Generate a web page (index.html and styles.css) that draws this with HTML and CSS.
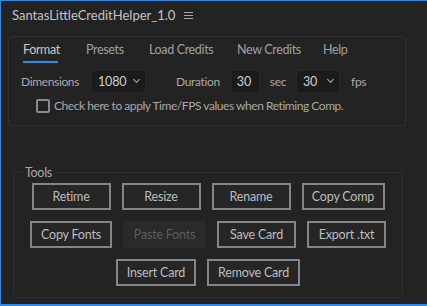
FILE: index.html
```html
<!DOCTYPE html>
<html lang="en">
<head>
    <meta charset="UTF-8">
    <title>SantasLittleCreditHelper_1.0</title>
    <link rel="stylesheet" href="styles.css">
</head>
<body>
    <div class="header">
        <span class="title">SantasLittleCreditHelper_1.0</span>
        <svg class="menu" width="9" height="8" viewBox="0 0 9 8"><path d="M0 1.5h9M0 4.5h9M0 7.5h9" stroke="#a8a8a8" stroke-width="1"/></svg>
    </div>

    <div class="panel">
        <div class="tabs">
            <span class="tab t1 active">Format</span>
            <span class="tab t2">Presets</span>
            <span class="tab t3">Load Credits</span>
            <span class="tab t4">New Credits</span>
            <span class="tab">Help</span>
        </div>
        <div class="row">
            <label class="lbl">Dimensions</label>
            <div class="select sel-dim">1080 <span class="chev"></span></div>
            <label class="lbl lbl-dur">Duration</label>
            <div class="num">30</div>
            <label class="lbl lbl-sec">sec</label>
            <div class="select sel-fps">30 <span class="chev"></span></div>
            <label class="lbl lbl-fps">fps</label>
        </div>
        <div class="check-row">
            <span class="box"></span>
            <span>Check here to apply Time/FPS values when Retiming Comp.</span>
        </div>
    </div>

    <fieldset class="tools">
        <legend>Tools</legend>
        <div class="btns">
            <button class="b w79">Retime</button>
            <button class="b w79">Resize</button>
            <button class="b w79">Rename</button>
            <button class="b w83">Copy Comp</button>
        </div>
        <div class="btns">
            <button class="b w82">Copy Fonts</button>
            <button class="b w83 off">Paste Fonts</button>
            <button class="b w79">Save Card</button>
            <button class="b w79">Export .txt</button>
        </div>
        <div class="btns">
            <button class="b w80">Insert Card</button>
            <button class="b w93">Remove Card</button>
        </div>
    </fieldset>
</body>
</html>
```

FILE: styles.css
```css
* {
    margin: 0;
    padding: 0;
    box-sizing: border-box;
    font-family: 'Lato', 'Open Sans', sans-serif;
}
html, body {
    height: 306px;
    overflow: hidden;
}
body {
    background: #232323;
    color: #a9a9a9;
    border-top: 1px solid #2d8ceb;
    border-left: 1px solid #2d8ceb;
    border-bottom: 2px solid #2d8ceb;
    font-size: 13px;
}
.header {
    display: flex;
    align-items: center;
    height: 29px;
    padding-left: 11px;
    padding-bottom: 1px;
}
.title {
    color: #c4c4c4;
    font-size: 13px;
}
.menu {
    margin-left: 9px;
}
.panel {
    margin: 6px 21px 0 7px;
    height: 90px;
    border: 1px solid #2f2f2f;
    border-radius: 3px;
    font-size: 12px;
    letter-spacing: -0.45px;
}
.tabs {
    display: flex;
    padding: 5px 0 0 14px;
    height: 27px;
    white-space: nowrap;
}
.tab {
    position: relative;
    flex-shrink: 0;
    color: #a0a0a0;
    font-size: 12.5px;
    letter-spacing: -0.35px;
}
.t1 { width: 63px; }
.t2 { width: 63px; }
.t3 { width: 88px; }
.t4 { width: 86px; }
.tab.active {
    color: #c9c9c9;
}
.tab.active::after {
    content: "";
    position: absolute;
    left: 0;
    width: 35px;
    top: 19px;
    height: 2px;
    background: #2d8ceb;
}
.row {
    display: flex;
    align-items: center;
    height: 24px;
    padding-left: 12px;
    margin-top: 5px;
    white-space: nowrap;
}
.row > * {
    flex-shrink: 0;
}
.lbl {
    color: #a9a9a9;
    font-size: 12px;
    letter-spacing: -0.35px;
}
.select {
    display: flex;
    align-items: center;
    justify-content: space-between;
    height: 23px;
    background: #1b1b1b;
    border: 1px solid #272727;
    border-radius: 2px;
    color: #d0d0d0;
    font-size: 12.5px;
    letter-spacing: -0.2px;
    padding: 0 6px 0 6px;
}
.sel-dim {
    width: 55px;
    margin-left: 12px;
}
.sel-fps {
    width: 44px;
    margin-left: 10px;
}
.chev {
    width: 5px;
    height: 5px;
    border-right: 1px solid #b0b0b0;
    border-bottom: 1px solid #b0b0b0;
    transform: rotate(45deg);
    margin-top: -3px;
}
.lbl-dur {
    margin-left: 30px;
}
.num {
    width: 29px;
    height: 23px;
    margin-left: 11px;
    background: #1b1b1b;
    border: 1px solid #272727;
    border-radius: 2px;
    color: #d0d0d0;
    font-size: 12.5px;
    letter-spacing: -0.2px;
    padding: 3px 0 0 5px;
}
.lbl-sec {
    margin-left: 10px;
}
.lbl-fps {
    margin-left: 11px;
}
.check-row {
    display: flex;
    align-items: center;
    margin: 5px 0 0 27px;
    color: #a9a9a9;
    white-space: nowrap;
}
.box {
    width: 14px;
    height: 14px;
    border: 2px solid #8a8a8a;
    border-radius: 2px;
    margin-right: 4px;
}
.tools {
    margin: 39px 24px 0 12px;
    height: 133px;
    border: 1px solid #2f2f2f;
    border-radius: 3px;
    padding: 0;
}
.tools legend {
    margin-left: 8px;
    padding: 0 3px;
    font-size: 12.5px;
    letter-spacing: -0.3px;
    color: #a9a9a9;
}
.btns {
    display: flex;
    justify-content: center;
    gap: 11px;
    margin-top: 3px;
}
.btns + .btns {
    margin-top: 11px;
}
.b {
    height: 27px;
    background: #262626;
    border: 2px solid #858585;
    color: #bdbdbd;
    font-size: 12.5px;
    letter-spacing: -0.2px;
    border-radius: 0;
}
.b.off {
    background: #2a2a2a;
    border-color: #2a2a2a;
    color: #5c5c5c;
}
.w79 { width: 79px; }
.w80 { width: 80px; }
.w82 { width: 82px; }
.w83 { width: 83px; }
.w93 { width: 93px; }
```
